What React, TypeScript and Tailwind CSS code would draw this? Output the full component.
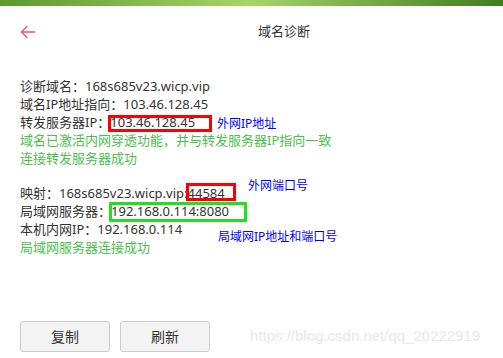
import React from "react";

const font = { fontFamily: '"Noto Sans", "Noto Sans CJK SC", sans-serif' };

// highlighted value with a hand-drawn style frame around it
function Marked({ value, frame }: { value: string; frame: string }) {
    return (
        <span className="relative inline-block">
            {value}
            <span className={`pointer-events-none absolute border-[3px] ${frame}`} />
        </span>
    );
}

function Note({ text, className }: { text: string; className: string }) {
    return <div className={`absolute text-[12px] leading-[16px] text-[#0000ff] ${className}`}>{text}</div>;
}

export default function App() {
    return (
        <div className="relative flex h-[358px] w-[503px] flex-col overflow-hidden bg-white text-[#333]" style={font}>
            {/* top strip */}
            <div className="h-[6px] w-full bg-gradient-to-r from-[#5c9a2c] via-[#a6d46a] to-[#3f7d1c]" />

            {/* header */}
            <div className="flex h-[52px] items-center px-[20px]">
                <svg width="16" height="14" viewBox="0 0 16 14" fill="none" stroke="#f0507a" strokeWidth="1.3">
                    <path d="M15 7H1.5M7.5 1L1.5 7l6 6" />
                </svg>
                <div className="ml-[222px] text-[13px]">域名诊断</div>
            </div>

            {/* content */}
            <div className="mt-[19px] flex flex-col gap-[17px] pl-[20px] text-[13px] leading-[18px]">
                <div className="flex flex-col">
                    <div>诊断域名：168s685v23.wicp.vip</div>
                    <div>域名IP地址指向：103.46.128.45</div>
                    <div>
                        转发服务器IP：
                        <Marked value="103.46.128.45" frame="-left-[2px] top-[2px] h-[17px] w-[104px] border-[#f00]" />
                    </div>
                    <div className="text-[#4cbf4c]">域名已激活内网穿透功能，并与转发服务器IP指向一致</div>
                    <div className="text-[#4cbf4c]">连接转发服务器成功</div>
                </div>

                <div className="flex flex-col">
                    <div>
                        映射：168s685v23.wicp.vip:
                        <Marked value="44584" frame="-left-[2px] -top-[1px] h-[18px] w-[50px] border-[#f00]" />
                    </div>
                    <div>
                        局域网服务器：
                        <Marked value="192.168.0.114:8080" frame="-left-[2px] top-0 h-[20px] w-[138px] border-[#22e01f]" />
                    </div>
                    <div>本机内网IP：192.168.0.114</div>
                    <div className="text-[#4cbf4c]">局域网服务器连接成功</div>
                </div>
            </div>

            {/* annotations */}
            <Note text="外网IP地址" className="left-[217px] top-[116px]" />
            <Note text="外网端口号" className="left-[248px] top-[178px]" />
            <Note text="局域网IP地址和端口号" className="left-[218px] top-[229px]" />

            {/* buttons */}
            <div className="mt-auto mb-[6px] flex items-center gap-[10px] pl-[20px]">
                <button className="h-[31px] w-[90px] rounded-[3px] border border-[#ccc] bg-[#f3f3f3] text-[14px]">复制</button>
                <button className="h-[31px] w-[90px] rounded-[3px] border border-[#ccc] bg-[#f3f3f3] text-[14px]">刷新</button>
                <span className="ml-[30px] text-[15px] text-[#e8e8e8]" style={{ fontFamily: '"Liberation Sans", sans-serif' }}>
                    https://blog.csdn.net/qq_20222919
                </span>
            </div>
        </div>
    );
}
